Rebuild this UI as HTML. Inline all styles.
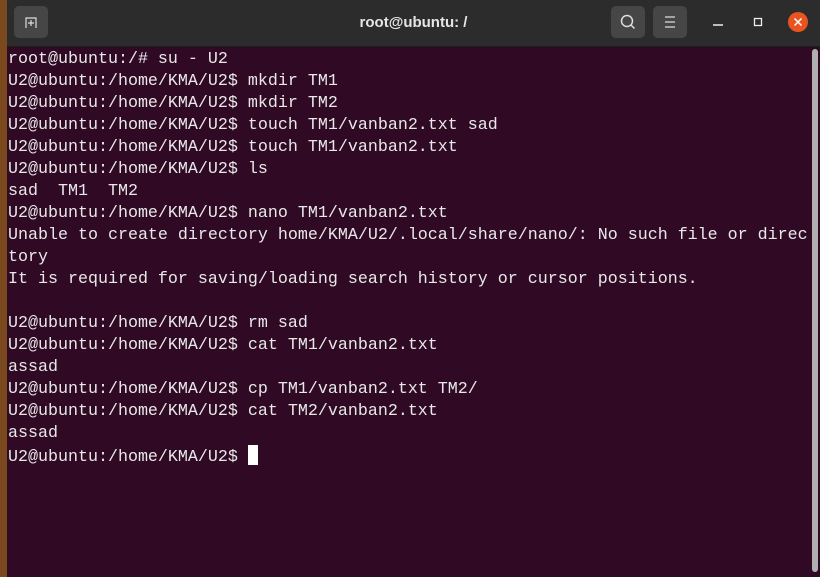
<!DOCTYPE html>
<html><head><style>
body{margin:0;width:820px;height:577px;overflow:hidden;background:#7a4a1e;position:relative;font-family:"Liberation Sans",sans-serif}
.win{position:absolute;left:7px;top:0;width:813px;height:577px;background:#300a24}
.hdr{position:absolute;left:0;top:0;width:813px;height:46px;background:#2c2c2c;border-bottom:1px solid #1e1e1e}
.btn{position:absolute;top:6px;width:34px;height:32px;background:#464646;border-radius:5px}
.title{position:absolute;left:0;right:0;top:14px;text-align:center;color:#e6e6e6;font-weight:bold;font-size:15px}
.term{position:absolute;left:1px;top:49px;font-family:"Liberation Mono",monospace;font-size:16.67px;line-height:22px;color:#e8e8e8;white-space:pre;margin:0}
.cur{display:inline-block;width:10px;height:20px;background:#fff;vertical-align:-4px}
.sb{position:absolute;left:805px;top:49px;width:6px;height:523px;background:#b0b0b0;border-radius:3px}
</style></head><body>
<div class="win">
<div class="hdr">
<div class="btn" style="left:7px"><svg width="34" height="32"><path d="M12 22V12h10v10M17 14v6M14 17h6" stroke="#ddd" fill="none" stroke-width="1.2"/></svg></div>
<div class="title">root@ubuntu: /</div>
<div class="btn" style="left:604px"><svg width="34" height="32"><circle cx="16" cy="15" r="5.5" stroke="#ddd" fill="none" stroke-width="1.5"/><path d="M20 19l3.5 3.5" stroke="#ddd" stroke-width="1.5"/></svg></div>
<div class="btn" style="left:646px"><svg width="34" height="32"><path d="M12 11h10M12 16h10M12 21h10" stroke="#ddd" stroke-width="1.3"/></svg></div>
<svg style="position:absolute;left:700px;top:10px" width="110" height="26"><path d="M6 15h10" stroke="#eee" stroke-width="1.5"/><rect x="47.5" y="8.5" width="7" height="7" stroke="#eee" fill="none" stroke-width="1.3"/><circle cx="91" cy="12" r="10" fill="#e95420"/><path d="M87.5 8.5l7 7M94.5 8.5l-7 7" stroke="#fff" stroke-width="1.5"/></svg>
</div>
<pre class="term">root@ubuntu:/# su - U2
U2@ubuntu:/home/KMA/U2$ mkdir TM1
U2@ubuntu:/home/KMA/U2$ mkdir TM2
U2@ubuntu:/home/KMA/U2$ touch TM1/vanban2.txt sad
U2@ubuntu:/home/KMA/U2$ touch TM1/vanban2.txt
U2@ubuntu:/home/KMA/U2$ ls
sad  TM1  TM2
U2@ubuntu:/home/KMA/U2$ nano TM1/vanban2.txt
Unable to create directory home/KMA/U2/.local/share/nano/: No such file or direc
tory
It is required for saving/loading search history or cursor positions.

U2@ubuntu:/home/KMA/U2$ rm sad
U2@ubuntu:/home/KMA/U2$ cat TM1/vanban2.txt
assad
U2@ubuntu:/home/KMA/U2$ cp TM1/vanban2.txt TM2/
U2@ubuntu:/home/KMA/U2$ cat TM2/vanban2.txt
assad
U2@ubuntu:/home/KMA/U2$ <span class="cur"></span></pre>
<div class="sb"></div>
</div>
</body></html>
